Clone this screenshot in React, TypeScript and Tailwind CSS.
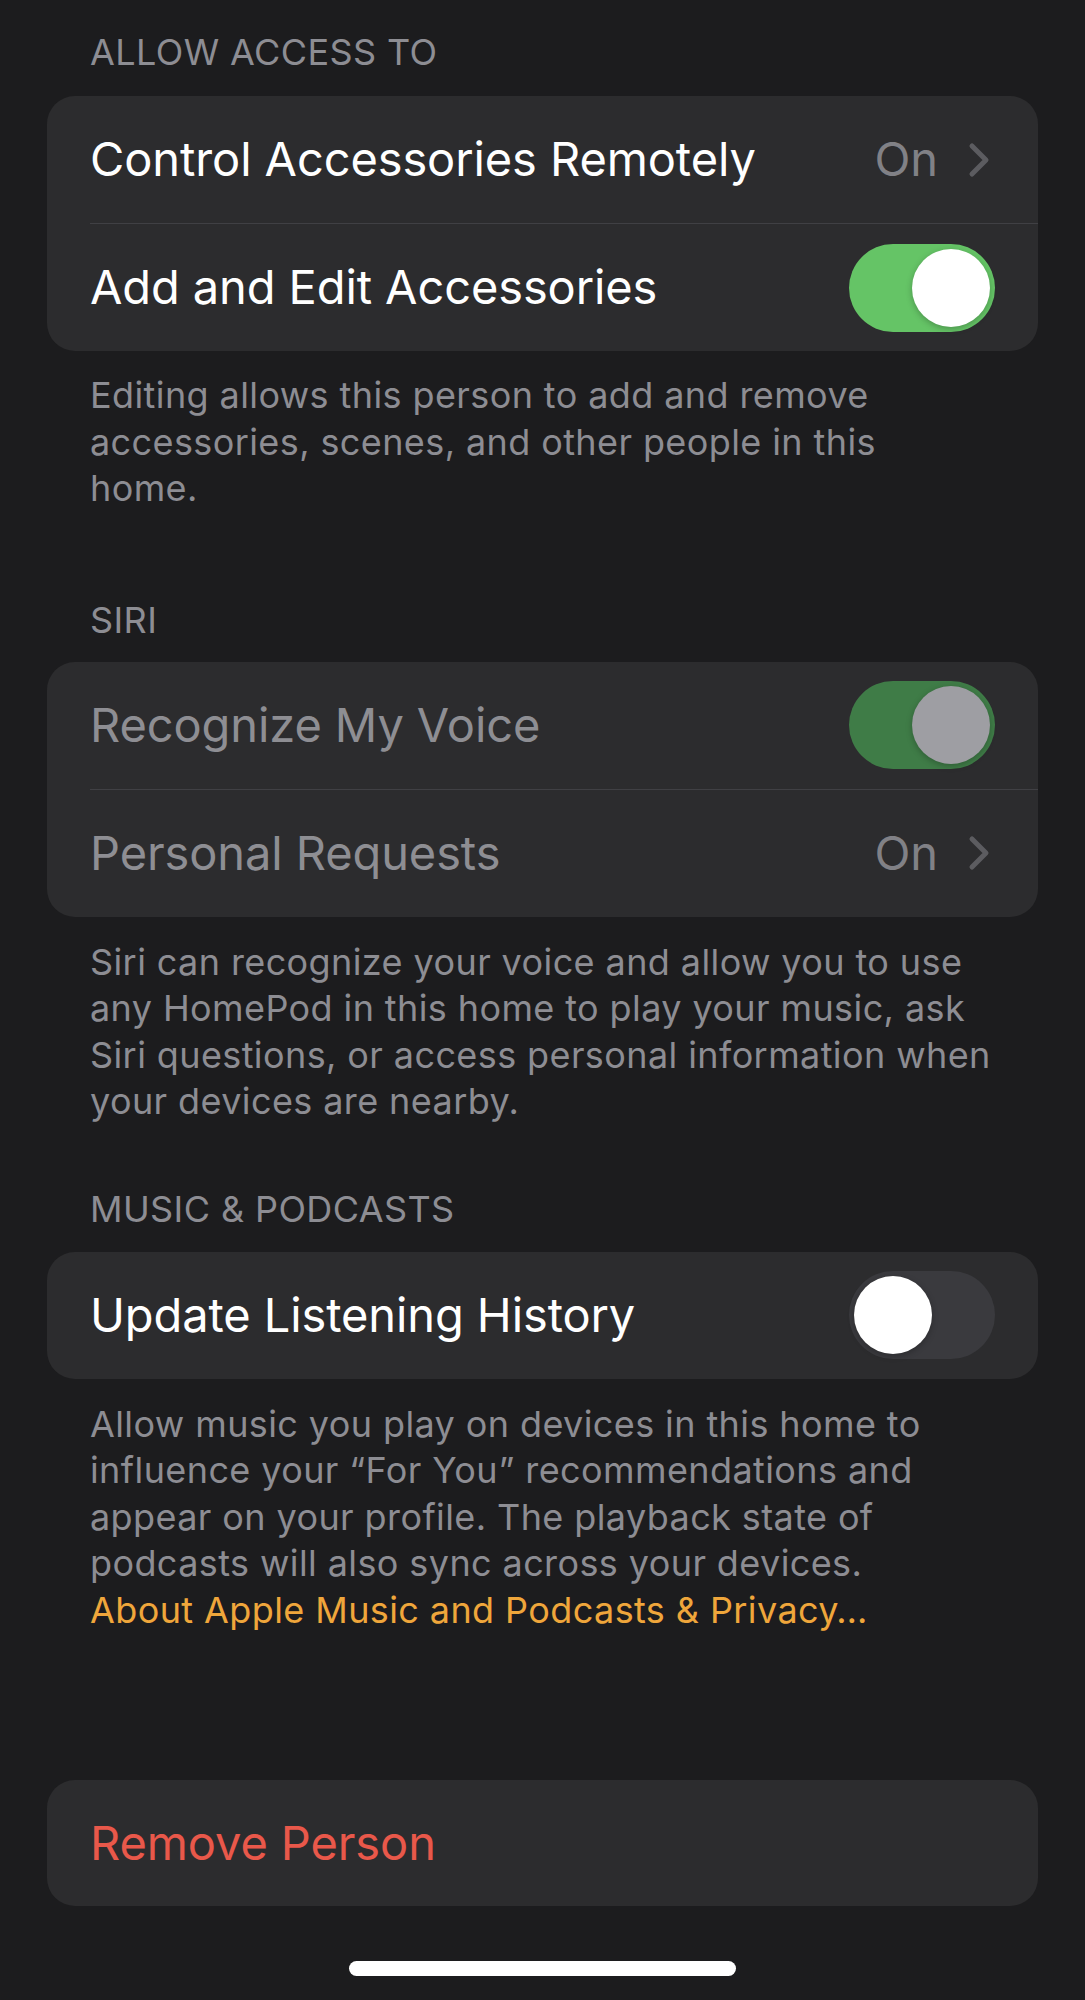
import React from "react";

const font = { fontFamily: "Inter, 'Liberation Sans', sans-serif" };

function Chevron() {
  return (
    <svg width="22" height="36" viewBox="0 0 22 36" fill="none" className="ml-[30px]">
      <path d="M4 4l14 14L4 32" stroke="#5c5c60" strokeWidth="5" strokeLinecap="round" strokeLinejoin="round" />
    </svg>
  );
}

function Toggle({ on, dim }: { on: boolean; dim?: boolean }) {
  const track = on ? (dim ? "bg-[#3f7c47]" : "bg-[#65c466]") : "bg-[#3a3a3e]";
  const knob = dim ? "bg-[#9e9ea3]" : "bg-white";
  return (
    <div className={`flex h-[88px] w-[146px] items-center rounded-full px-[5px] ${track} ${on ? "justify-end" : "justify-start"}`}>
      <div className={`h-[78px] w-[78px] rounded-full shadow-[0_2px_6px_rgba(0,0,0,0.25)] ${knob}`} />
    </div>
  );
}

function Row({ label, dim, children }: { label: string; dim?: boolean; children?: React.ReactNode }) {
  return (
    <div className="flex h-[127px] items-center justify-between pl-[43px] pr-[43px]">
      <span className={`text-[47px] tracking-[-0.1px] ${dim ? "text-[#8e8e93]" : "text-white"}`}>{label}</span>
      {children}
    </div>
  );
}

function Value({ text }: { text: string }) {
  return (
    <div className="flex items-center pr-[5px]">
      <span className="text-[47px] tracking-[-0.1px] text-[#818186]">{text}</span>
      <Chevron />
    </div>
  );
}

function Divider() {
  return <div className="ml-[43px] h-px bg-[#404044]" />;
}

function Header({ children, className }: { children: React.ReactNode; className?: string }) {
  return (
    <div className={`pl-[43px] text-[36px] leading-[44px] uppercase tracking-[0.4px] text-[#8d8d93] ${className ?? ""}`}>
      {children}
    </div>
  );
}

function Footer({ children, className }: { children: React.ReactNode; className?: string }) {
  return (
    <p className={`pl-[43px] text-[36px] leading-[46.5px] tracking-[0.4px] text-[#8d8d93] ${className ?? ""}`}>
      {children}
    </p>
  );
}

export default function App() {
  return (
    <div style={font} className="min-h-[2000px] w-full bg-[#1c1c1e] px-[47px] pt-[30px] antialiased">
      <Header className="mb-[22px]">Allow Access To</Header>
      <div className="overflow-hidden rounded-[28px] bg-[#2c2c2e]">
        <Row label="Control Accessories Remotely">
          <Value text="On" />
        </Row>
        <Divider />
        <Row label="Add and Edit Accessories">
          <Toggle on />
        </Row>
      </div>
      <Footer className="mt-[21px]">
        Editing allows this person to add and remove
        <br />
        accessories, scenes, and other people in this
        <br />
        home.
      </Footer>

      <Header className="mt-[86px] mb-[20px]">Siri</Header>
      <div className="overflow-hidden rounded-[28px] bg-[#2c2c2e]">
        <Row label="Recognize My Voice" dim>
          <Toggle on dim />
        </Row>
        <Divider />
        <Row label="Personal Requests" dim>
          <Value text="On" />
        </Row>
      </div>
      <Footer className="mt-[22px]">
        Siri can recognize your voice and allow you to use
        <br />
        any HomePod in this home to play your music, ask
        <br />
        Siri questions, or access personal information when
        <br />
        your devices are nearby.
      </Footer>

      <Header className="mt-[62px] mb-[21px]">Music &amp; Podcasts</Header>
      <div className="overflow-hidden rounded-[28px] bg-[#2c2c2e]">
        <Row label="Update Listening History">
          <Toggle on={false} />
        </Row>
      </div>
      <Footer className="mt-[22px]">
        Allow music you play on devices in this home to
        <br />
        influence your “For You” recommendations and
        <br />
        appear on your profile. The playback state of
        <br />
        podcasts will also sync across your devices.
        <br />
        <span className="text-[#efa63b]">About Apple Music and Podcasts &amp; Privacy…</span>
      </Footer>

      <div className="mt-[147px] flex h-[126px] items-center rounded-[28px] bg-[#2c2c2e] pl-[43px]">
        <span className="text-[47px] tracking-[-0.1px] text-[#e9584a]">Remove Person</span>
      </div>

      <div className="mt-[55px] flex justify-center">
        <div className="h-[15px] w-[387px] rounded-full bg-white" />
      </div>
    </div>
  );
}
